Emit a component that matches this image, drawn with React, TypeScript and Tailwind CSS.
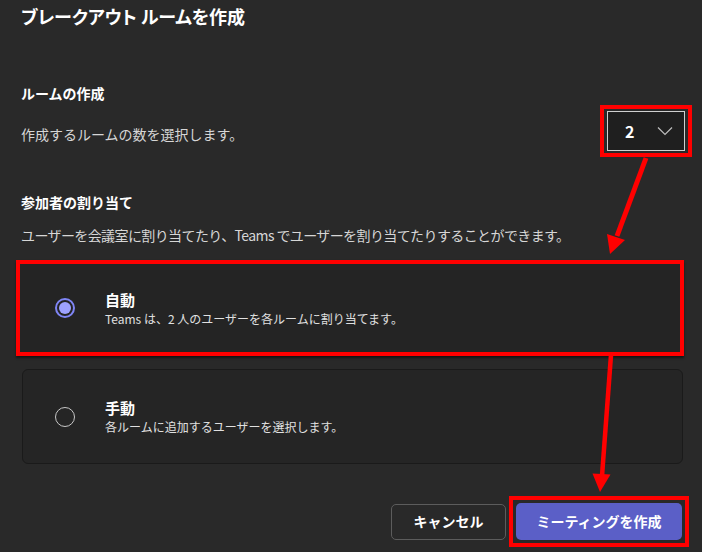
const Radio = ({ checked }: { checked: boolean }) => {
  if (checked) {
    return (
      <div className="w-[20px] h-[20px] rounded-full border-[2px] border-[#7f85f5] flex items-center justify-center">
        <div className="w-[12px] h-[12px] rounded-full bg-[#9ea2ff]" />
      </div>
    );
  }
  return <div className="w-[20px] h-[20px] rounded-full border-[1.5px] border-[#c8c8c8]" />;
};

const Arrows = () => (
  <svg className="absolute left-0 top-0 pointer-events-none" width="702" height="552" viewBox="0 0 702 552">
    <line x1="646" y1="158" x2="617" y2="236" stroke="#ff0000" strokeWidth="5" />
    <polygon points="610,254 625,240 607,234" fill="#ff0000" />
    <line x1="611" y1="355" x2="602" y2="476" stroke="#ff0000" strokeWidth="4.5" />
    <polygon points="600,492 610.5,474.5 592.5,473.5" fill="#ff0000" />
  </svg>
);

const App = () => {
  return (
    <div className="relative w-[702px] h-[552px] overflow-hidden bg-[#292929] text-white font-['Noto_Sans_CJK_JP','Noto_Sans',sans-serif]">
      <div className="pl-[21px] pt-[4px]">
        <h1 className="text-[18px] leading-[24px] font-bold [font-feature-settings:'palt']">ブレークアウト ルームを作成</h1>

        <section className="mt-[55px] flex items-start justify-between pr-[10px]">
          <div>
            <h2 className="text-[14px] leading-[20px] font-bold">ルームの作成</h2>
            <p className="mt-[21px] text-[14px] leading-[20px] text-[#d6d6d6]">作成するルームの数を選択します。</p>
          </div>
          <div className="mt-[22px] border-[4px] border-[#ff0000] py-[2px] px-[3px]">
            <div className="w-[78px] h-[40px] bg-[#1f1f1f] border border-[#d0d0d0] flex items-center pl-[17px] pr-[11px] justify-between">
              <span className="text-[16px] font-semibold">2</span>
              <svg width="16" height="10" viewBox="0 0 16 10">
                <path d="M1 1.5 L8 8.5 L15 1.5" fill="none" stroke="#bdbdbd" strokeWidth="1.2" />
              </svg>
            </div>
          </div>
        </section>

        <section className="mt-[35px]">
          <h2 className="text-[14px] leading-[20px] font-bold">参加者の割り当て</h2>
          <p className="mt-[13px] text-[14px] leading-[20px] text-[#d6d6d6] tracking-[-0.6px]">
            ユーザーを会議室に割り当てたり、Teams でユーザーを割り当てたりすることができます。
          </p>
        </section>
      </div>

      <div className="mt-[15px] ml-[16px] w-[668px] flex flex-col">
        <div className="h-[96px] border-[4px] border-[#ff0000] bg-[#242424] shadow-[0_2px_2px_rgba(0,0,0,0.5)] flex items-center pl-[35px]">
          <Radio checked />
          <div className="ml-[30px]">
            <div className="text-[15px] leading-[20px] font-bold">自動</div>
            <div className="text-[12px] leading-[17px] text-[#e0e0e0]">Teams は、2 人のユーザーを各ルームに割り当てます。</div>
          </div>
        </div>

        <div className="mt-[13px] ml-[6px] w-[661px] h-[95px] rounded-[6px] border border-[#1a1a1a] bg-[#252525] flex items-center pl-[32px]">
          <Radio checked={false} />
          <div className="ml-[30px]">
            <div className="text-[15px] leading-[20px] font-bold">手動</div>
            <div className="text-[12px] leading-[17px] text-[#e0e0e0]">各ルームに追加するユーザーを選択します。</div>
          </div>
        </div>
      </div>

      <div className="mt-[32px] pr-[13px] flex justify-end items-center gap-[3px]">
        <button className="w-[115px] h-[36px] rounded-[5px] border border-[#5c5c5c] bg-[#292929] text-[14px] font-bold text-white">
          キャンセル
        </button>
        <div className="border-[4px] border-[#ff0000] p-[3px]">
          <button className="w-[166px] h-[37px] rounded-[5px] bg-[#5b5fc7] text-[14px] font-bold text-white">
            ミーティングを作成
          </button>
        </div>
      </div>

      <Arrows />
    </div>
  );
};

export default App;
